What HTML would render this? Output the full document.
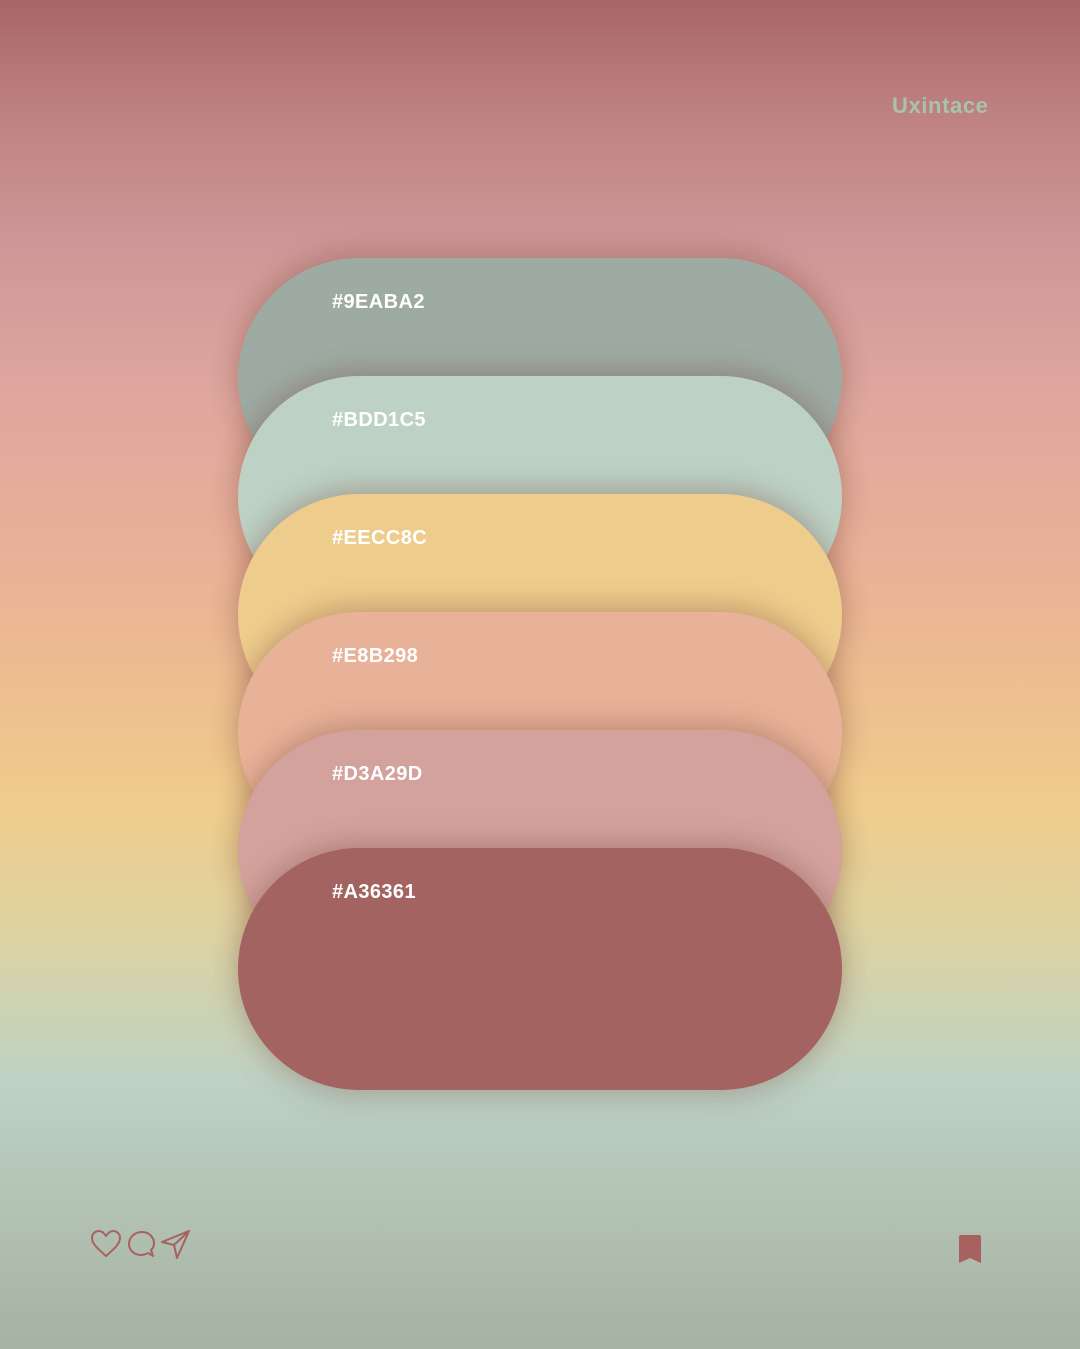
<!DOCTYPE html>
<html><head><style>
body{margin:0;width:1080px;height:1349px;overflow:hidden;position:relative;
background:linear-gradient(to bottom,#a86566 0px,#bf8383 120px,#cf9898 250px,#dfa79e 400px,#e9b197 560px,#eebf8f 700px,#efcd8d 810px,#dfd29f 920px,#c9d3b8 1030px,#bdd1c5 1090px,#b3c3b4 1200px,#a6b2a3 1349px);
font-family:"Liberation Sans",sans-serif;}
.p{position:absolute;left:238px;width:604px;height:242px;border-radius:121px;box-shadow:0 -8px 24px rgba(120,70,60,.25),0 10px 30px rgba(120,70,60,.22);}
.p span{position:absolute;left:94px;top:33px;color:#fff;font-weight:bold;font-size:20px;letter-spacing:0.4px}
.logo{position:absolute;left:892px;top:93px;color:#a9c2aa;font-weight:bold;font-size:22px;letter-spacing:0.6px}
</style></head><body>
<div class="logo">Uxintace</div>
<div class="p" style="top:258px;background:#9eaba2"><span>#9EABA2</span></div>
<div class="p" style="top:376px;background:#bdd1c5"><span>#BDD1C5</span></div>
<div class="p" style="top:494px;background:#eecc8c"><span>#EECC8C</span></div>
<div class="p" style="top:612px;background:#e8b298"><span>#E8B298</span></div>
<div class="p" style="top:730px;background:#d3a29d"><span>#D3A29D</span></div>
<div class="p" style="top:848px;background:#a36361"><span>#A36361</span></div>
<svg style="position:absolute;left:88px;top:1228px" width="106" height="34" viewBox="0 0 106 34" fill="none" stroke="#a9615f" stroke-width="2" stroke-linejoin="round">
<path d="M18 28 C10 21 4 16 4 10 C4 5 8 3 11 3 C14 3 16 5 18 8 C20 5 22 3 25 3 C29 3 32 6 32 10 C32 16 26 21 18 28Z"/>
<path d="M54 4 C47 4 41 9 41 16 C41 22 46 27 53 27 C56 27 58 26 60 25 L65 28 L63 22 C65 20 66 18 66 16 C66 9 61 4 54 4Z"/>
<path d="M74 14 L101 3 L89 30 L86 17 Z M86 17 L101 3"/>
</svg>
<svg style="position:absolute;left:958px;top:1234px" width="24" height="30" viewBox="0 0 24 30"><path d="M3 1H21Q23 1 23 3V29L12 24L1 29V3Q1 1 3 1Z" fill="#a9615f"/></svg>
</body></html>
